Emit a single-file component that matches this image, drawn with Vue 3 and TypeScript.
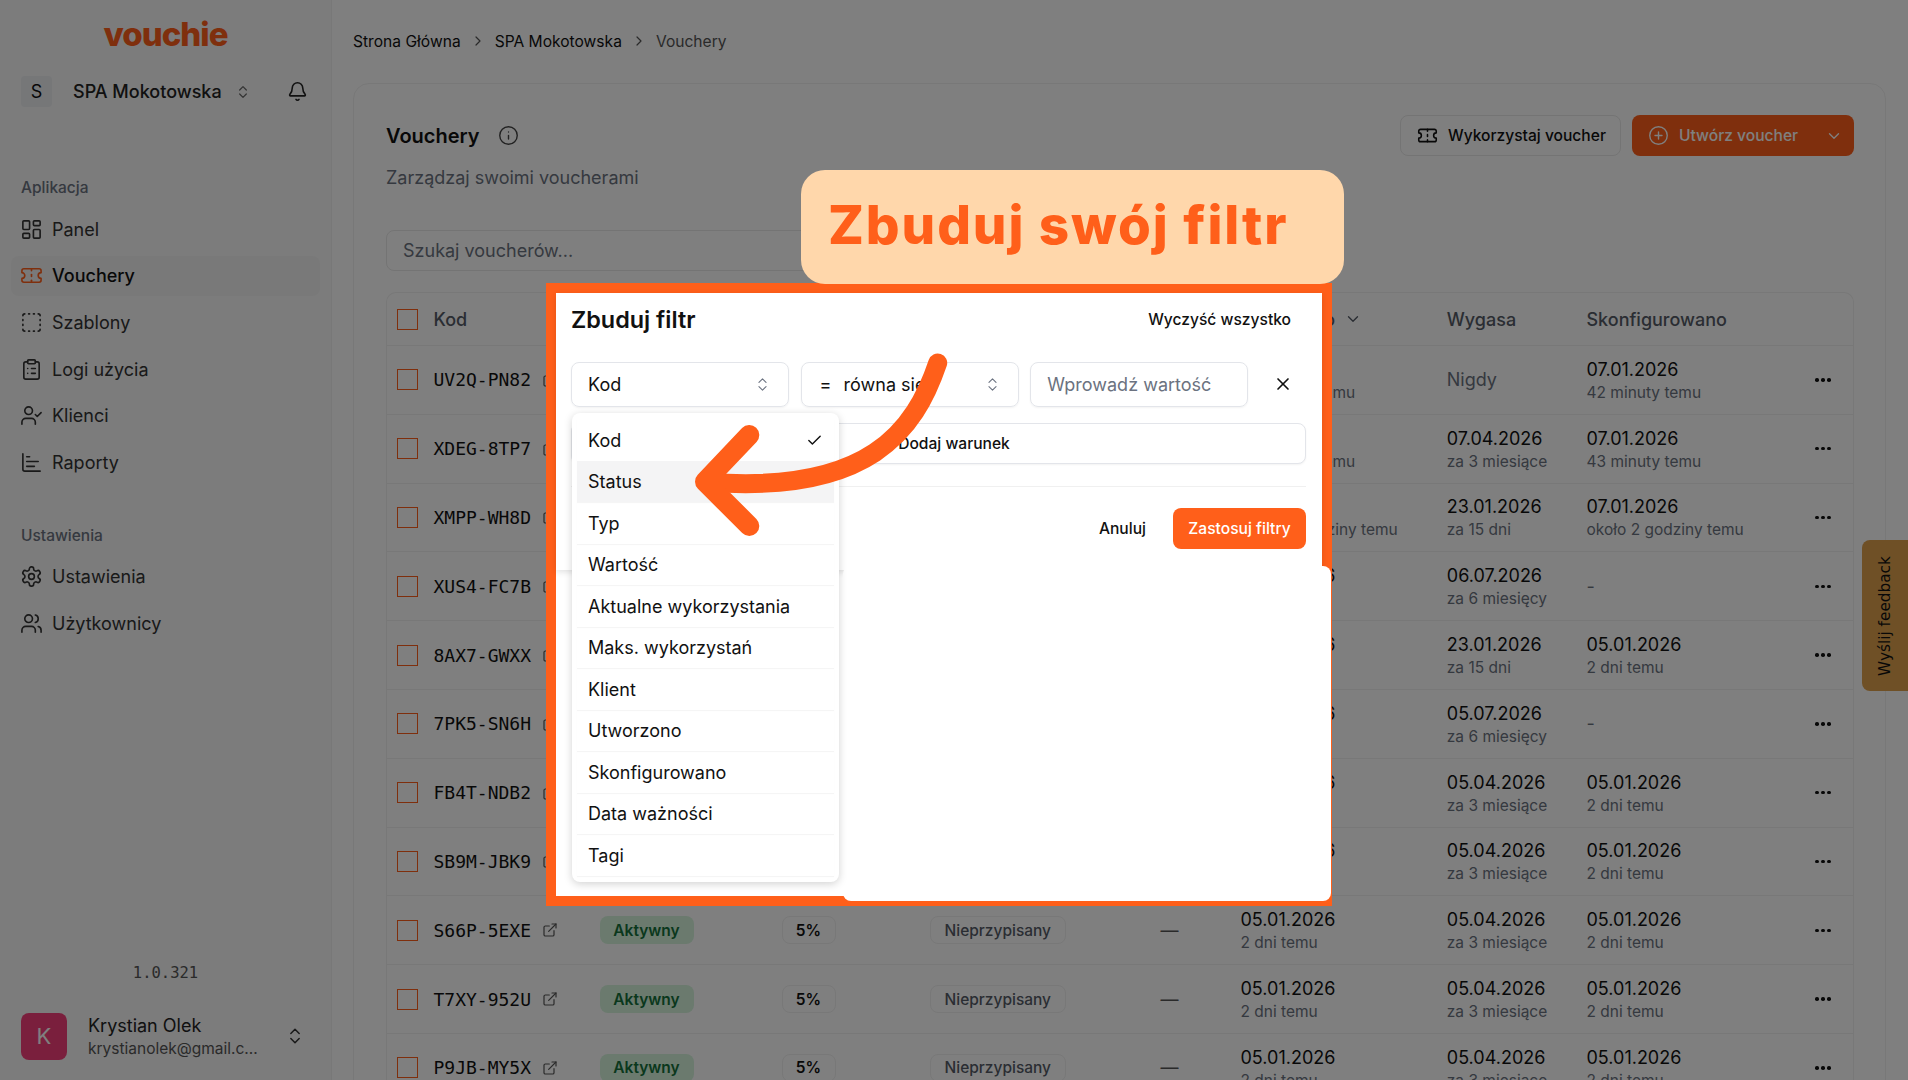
<script setup lang="ts">
import { h } from 'vue';

const paths: Record<string, string[]> = {
  dashboard: [
    'M4 3h5a1 1 0 0 1 1 1v7a1 1 0 0 1-1 1H4a1 1 0 0 1-1-1V4a1 1 0 0 1 1-1z',
    'M15 3h5a1 1 0 0 1 1 1v3a1 1 0 0 1-1 1h-5a1 1 0 0 1-1-1V4a1 1 0 0 1 1-1z',
    'M15 12h5a1 1 0 0 1 1 1v7a1 1 0 0 1-1 1h-5a1 1 0 0 1-1-1v-7a1 1 0 0 1 1-1z',
    'M4 16h5a1 1 0 0 1 1 1v3a1 1 0 0 1-1 1H4a1 1 0 0 1-1-1v-3a1 1 0 0 1 1-1z',
  ],
  ticket: [
    'M2 9a3 3 0 0 1 0 6v2a2 2 0 0 0 2 2h16a2 2 0 0 0 2-2v-2a3 3 0 0 1 0-6V7a2 2 0 0 0-2-2H4a2 2 0 0 0-2 2Z',
    'M12 5v2',
    'M12 11v2',
    'M12 17v2',
  ],
  dashed: [
    'M5 3a2 2 0 0 0-2 2',
    'M19 3a2 2 0 0 1 2 2',
    'M21 19a2 2 0 0 1-2 2',
    'M5 21a2 2 0 0 1-2-2',
    'M9 3h1',
    'M9 21h1',
    'M14 3h1',
    'M14 21h1',
    'M3 9v1',
    'M21 9v1',
    'M3 14v1',
    'M21 14v1',
  ],
  clipboard: [
    'M9 2h6a1 1 0 0 1 1 1v2a1 1 0 0 1-1 1H9a1 1 0 0 1-1-1V3a1 1 0 0 1 1-1z',
    'M16 4h2a2 2 0 0 1 2 2v14a2 2 0 0 1-2 2H6a2 2 0 0 1-2-2V6a2 2 0 0 1 2-2h2',
    'M12 11h4',
    'M12 16h4',
    'M8 11h.01',
    'M8 16h.01',
  ],
  usercheck: [
    'M2 21v-2a4 4 0 0 1 4-4h6a4 4 0 0 1 4 4v2',
    'M13 7a4 4 0 1 1-8 0 4 4 0 0 1 8 0',
    'm16 11 2 2 4-4',
  ],
  chart: ['M3 3v16a2 2 0 0 0 2 2h16', 'M7 16h8', 'M7 11h12', 'M7 6h3'],
  gear: [
    'M12.22 2h-.44a2 2 0 0 0-2 2v.18a2 2 0 0 1-1 1.73l-.43.25a2 2 0 0 1-2 0l-.15-.08a2 2 0 0 0-2.73.73l-.22.38a2 2 0 0 0 .73 2.73l.15.1a2 2 0 0 1 1 1.72v.51a2 2 0 0 1-1 1.74l-.15.09a2 2 0 0 0-.73 2.73l.22.38a2 2 0 0 0 2.73.73l.15-.08a2 2 0 0 1 2 0l.43.25a2 2 0 0 1 1 1.73V20a2 2 0 0 0 2 2h.44a2 2 0 0 0 2-2v-.18a2 2 0 0 1 1-1.73l.43-.25a2 2 0 0 1 2 0l.15.08a2 2 0 0 0 2.73-.73l.22-.39a2 2 0 0 0-.73-2.73l-.15-.08a2 2 0 0 1-1-1.74v-.5a2 2 0 0 1 1-1.74l.15-.09a2 2 0 0 0 .73-2.73l-.22-.38a2 2 0 0 0-2.73-.73l-.15.08a2 2 0 0 1-2 0l-.43-.25a2 2 0 0 1-1-1.73V4a2 2 0 0 0-2-2z',
    'M15 12a3 3 0 1 1-6 0 3 3 0 0 1 6 0',
  ],
  users: [
    'M16 21v-2a4 4 0 0 0-4-4H6a4 4 0 0 0-4 4v2',
    'M13 7a4 4 0 1 1-8 0 4 4 0 0 1 8 0',
    'M22 21v-2a4 4 0 0 0-3-3.87',
    'M16 3.13a4 4 0 0 1 0 7.75',
  ],
  bell: [
    'M10.27 21a2 2 0 0 0 3.46 0',
    'M3.26 15.33A1 1 0 0 0 4 17h16a1 1 0 0 0 .74-1.67C19.41 13.96 18 12.5 18 8A6 6 0 0 0 6 8c0 4.5-1.41 5.96-2.74 7.33',
  ],
  updown: ['m7 15 5 5 5-5', 'm7 9 5-5 5 5'],
  chevronright: ['m9 18 6-6-6-6'],
  chevrondown: ['m6 9 6 6 6-6'],
  info: ['M22 12a10 10 0 1 1-20 0 10 10 0 0 1 20 0', 'M12 16v-4', 'M12 8h.01'],
  pluscircle: ['M22 12a10 10 0 1 1-20 0 10 10 0 0 1 20 0', 'M8 12h8', 'M12 8v8'],
  plus: ['M5 12h14', 'M12 5v14'],
  link: ['M15 3h6v6', 'M10 14 21 3', 'M18 13v6a2 2 0 0 1-2 2H5a2 2 0 0 1-2-2V8a2 2 0 0 1 2-2h6'],
  x: ['M18 6 6 18', 'm6 6 12 12'],
  check: ['M20 6 9 17l-5-5'],
};

// small inline icon, strokes come from the paths map above
const Icon = (props: { name: string; size?: number; sw?: number }) =>
  h(
    'svg',
    {
      width: props.size ?? 20,
      height: props.size ?? 20,
      viewBox: '0 0 24 24',
      fill: 'none',
      stroke: 'currentColor',
      'stroke-width': props.sw ?? 1.8,
      'stroke-linecap': 'round',
      'stroke-linejoin': 'round',
    },
    paths[props.name].map((d) => h('path', { d })),
  );
Icon.props = ['name', 'size', 'sw'];

const mainNav = [
  { label: 'Panel', icon: 'dashboard' },
  { label: 'Vouchery', icon: 'ticket', active: true },
  { label: 'Szablony', icon: 'dashed' },
  { label: 'Logi użycia', icon: 'clipboard' },
  { label: 'Klienci', icon: 'usercheck' },
  { label: 'Raporty', icon: 'chart' },
];
const settingsNav = [
  { label: 'Ustawienia', icon: 'gear' },
  { label: 'Użytkownicy', icon: 'users' },
];

const d3m = ['05.04.2026', 'za 3 miesiące'];
const conf = ['05.01.2026', '2 dni temu'];
const rows = [
  { code: 'UV2Q-PN82', created: ['07.01.2026', '42 minuty temu'], expires: ['', 'Nigdy'], conf: ['07.01.2026', '42 minuty temu'] },
  { code: 'XDEG-8TP7', created: ['07.01.2026', '43 minuty temu'], expires: ['07.04.2026', 'za 3 miesiące'], conf: ['07.01.2026', '43 minuty temu'] },
  { code: 'XMPP-WH8D', created: ['07.01.2026', 'około 2 godziny temu'], expires: ['23.01.2026', 'za 15 dni'], conf: ['07.01.2026', 'około 2 godziny temu'] },
  { code: 'XUS4-FC7B', created: conf, expires: ['06.07.2026', 'za 6 miesięcy'], conf: null },
  { code: '8AX7-GWXX', created: conf, expires: ['23.01.2026', 'za 15 dni'], conf },
  { code: '7PK5-SN6H', created: conf, expires: ['05.07.2026', 'za 6 miesięcy'], conf: null },
  { code: 'FB4T-NDB2', created: conf, expires: d3m, conf },
  { code: 'SB9M-JBK9', created: conf, expires: d3m, conf },
  { code: 'S66P-5EXE', created: conf, expires: d3m, conf },
  { code: 'T7XY-952U', created: conf, expires: d3m, conf },
  { code: 'P9JB-MY5X', created: conf, expires: d3m, conf },
];

const fields = [
  'Kod',
  'Status',
  'Typ',
  'Wartość',
  'Aktualne wykorzystania',
  'Maks. wykorzystań',
  'Klient',
  'Utworzono',
  'Skonfigurowano',
  'Data ważności',
  'Tagi',
];
</script>

<template>
  <div class="page">
    <aside class="sidebar">
      <div class="logo">vouchie</div>
      <div class="workspace">
        <span class="ws-badge">S</span>
        <span class="ws-name">SPA Mokotowska</span>
        <Icon name="updown" :size="16" class="ws-arrows" />
        <Icon name="bell" :size="21" class="ws-bell" />
      </div>

      <div class="nav-label first">Aplikacja</div>
      <nav class="nav">
        <a v-for="item in mainNav" :key="item.label" class="nav-item" :class="{ active: item.active }">
          <Icon :name="item.icon" :size="23" :sw="1.7" />
          <span>{{ item.label }}</span>
        </a>
      </nav>

      <div class="nav-label second">Ustawienia</div>
      <nav class="nav">
        <a v-for="item in settingsNav" :key="item.label" class="nav-item">
          <Icon :name="item.icon" :size="23" :sw="1.7" />
          <span>{{ item.label }}</span>
        </a>
      </nav>

      <div class="version">1.0.321</div>
      <div class="user">
        <span class="user-avatar">K</span>
        <div class="user-text">
          <div class="user-name">Krystian Olek</div>
          <div class="user-mail">krystianolek@gmail.c...</div>
        </div>
        <Icon name="updown" :size="20" class="user-arrows" />
      </div>
    </aside>

    <main class="main">
      <div class="crumbs">
        <span>Strona Główna</span>
        <Icon name="chevronright" :size="16" class="crumb-sep" />
        <span>SPA Mokotowska</span>
        <Icon name="chevronright" :size="16" class="crumb-sep" />
        <span class="crumb-last">Vouchery</span>
      </div>

      <section class="card">
        <header class="card-head">
          <div>
            <div class="title-row">
              <h1>Vouchery</h1>
              <Icon name="info" :size="21" class="title-info" :sw="1.6" />
            </div>
            <p class="subtitle">Zarządzaj swoimi voucherami</p>
          </div>
          <div class="actions">
            <button class="btn-outline"><Icon name="ticket" :size="21" />Wykorzystaj voucher</button>
            <button class="btn-primary">
              <Icon name="pluscircle" :size="21" :sw="1.6" />
              <span>Utwórz voucher</span>
              <Icon name="chevrondown" :size="18" class="btn-chevron" />
            </button>
          </div>
        </header>

        <div class="search">Szukaj voucherów...</div>

        <div class="table">
          <div class="row head">
            <span class="box"></span>
            <span>Kod</span>
            <span>Status</span>
            <span>Wartość</span>
            <span>Klient</span>
            <span>Użycie</span>
            <span class="sortable">Utworzono <Icon name="chevrondown" :size="18" /></span>
            <span>Wygasa</span>
            <span>Skonfigurowano</span>
            <span></span>
          </div>
          <div v-for="row in rows" :key="row.code" class="row">
            <span class="box"></span>
            <span class="code">{{ row.code }}<Icon name="link" :size="16" class="code-link" /></span>
            <span><span class="pill green">Aktywny</span></span>
            <span><span class="pill outline strong">5%</span></span>
            <span><span class="pill outline">Nieprzypisany</span></span>
            <span class="dash">—</span>
            <span class="date">
              <span class="date-main">{{ row.created[0] }}</span>
              <span class="date-sub">{{ row.created[1] }}</span>
            </span>
            <span v-if="row.expires[0]" class="date">
              <span class="date-main">{{ row.expires[0] }}</span>
              <span class="date-sub">{{ row.expires[1] }}</span>
            </span>
            <span v-else class="never">{{ row.expires[1] }}</span>
            <span v-if="row.conf" class="date">
              <span class="date-main">{{ row.conf[0] }}</span>
              <span class="date-sub">{{ row.conf[1] }}</span>
            </span>
            <span v-else class="never">-</span>
            <span class="dots"><i></i><i></i><i></i></span>
          </div>
        </div>
      </section>
    </main>

    <div class="feedback"><span>Wyślij feedback</span></div>

    <!-- product tour layer -->
    <div class="dim"></div>

    <div class="frame">
      <div class="dialog">
        <div class="dialog-head">
          <h2>Zbuduj filtr</h2>
          <span class="clear">Wyczyść wszystko</span>
        </div>
        <div class="filter-row">
          <div class="field">
            <span>Kod</span>
            <Icon name="updown" :size="17" class="field-arrows" :sw="1.5" />
          </div>
          <div class="field">
            <span class="eq">=</span>
            <span>równa się</span>
            <Icon name="updown" :size="17" class="field-arrows" :sw="1.5" />
          </div>
          <div class="field placeholder">Wprowadź wartość</div>
          <Icon name="x" :size="20" class="remove" :sw="2" />
        </div>
        <button class="add"><Icon name="plus" :size="18" />Dodaj warunek</button>
        <div class="dialog-foot">
          <span class="cancel">Anuluj</span>
          <button class="apply">Zastosuj filtry</button>
        </div>
      </div>
    </div>
    <div class="patch"></div>

    <ul class="dropdown">
      <li v-for="(f, i) in fields" :key="f" :class="{ hover: f === 'Status' }">
        <span>{{ f }}</span>
        <Icon v-if="i === 0" name="check" :size="17" :sw="2" />
      </li>
    </ul>

    <svg class="arrow" width="1908" height="1080" viewBox="0 0 1908 1080" fill="none">
      <path d="M937.7 363C915 430 870 495 706 482" stroke="#ff5f1a" stroke-width="19" stroke-linecap="round" />
      <path d="M749.3 435 705 481.7 749.3 526" stroke="#ff5f1a" stroke-width="20" stroke-linecap="round" stroke-linejoin="round" />
    </svg>

    <div class="callout">Zbuduj swój filtr</div>
  </div>
</template>

<style>
html,
body {
  margin: 0;
  background: #fff;
}
</style>

<style scoped>
.page {
  position: relative;
  display: flex;
  width: 1908px;
  height: 1080px;
  overflow: hidden;
  background: #fff;
  color: #111;
  font-family: Inter, 'Noto Sans', sans-serif;
}

/* sidebar */
.sidebar {
  display: flex;
  flex-direction: column;
  flex: none;
  width: 332px;
  height: 1080px;
  box-sizing: border-box;
  padding-bottom: 20px;
  background: #f8f8f8;
  border-right: 1px solid #f0f0f0;
}
.logo {
  height: 70px;
  line-height: 68px;
  text-align: center;
  color: #ff5f1a;
  font-size: 33px;
  font-weight: 800;
  letter-spacing: -1px;
}
.workspace {
  display: flex;
  align-items: center;
  height: 31px;
  margin-top: 6px;
  padding-left: 21px;
}
.ws-badge {
  display: flex;
  align-items: center;
  justify-content: center;
  width: 31px;
  height: 31px;
  border-radius: 4px;
  background: #eceef1;
  font-size: 18px;
}
.ws-name {
  margin-left: 21px;
  font-size: 18px;
  font-weight: 500;
  color: #222;
}
.ws-arrows {
  margin-left: 13px;
  color: #666;
}
.ws-bell {
  margin-left: 36px;
  color: #222;
}
.nav-label {
  height: 20px;
  line-height: 20px;
  padding-left: 21px;
  font-size: 15.5px;
  font-weight: 500;
  color: #6b7280;
}
.nav-label.first {
  margin-top: 71px;
  margin-bottom: 11px;
}
.nav-label.second {
  margin-top: 43.4px;
  margin-bottom: 10.6px;
}
.nav {
  display: flex;
  flex-direction: column;
  gap: 6.7px;
}
.nav-item {
  display: flex;
  align-items: center;
  gap: 9px;
  height: 40px;
  width: 309px;
  box-sizing: border-box;
  margin-left: 11px;
  padding-left: 9px;
  border-radius: 8px;
  font-size: 18px;
  color: #333;
}
.nav-item.active {
  background: #f2f2f2;
  color: #111;
  font-weight: 500;
}
.nav-item.active svg {
  color: #ff5f1a;
}
.version {
  margin-top: auto;
  margin-bottom: 28px;
  text-align: center;
  font-family: 'DejaVu Sans Mono', monospace;
  font-size: 15.5px;
  line-height: 22px;
  color: #555;
}
.user {
  display: flex;
  align-items: center;
  padding-left: 21px;
}
.user-avatar {
  display: flex;
  align-items: center;
  justify-content: center;
  width: 46px;
  height: 47px;
  border-radius: 8px;
  background: #f53f7a;
  color: #fff;
  font-size: 22px;
}
.user-text {
  margin-left: 21px;
  padding-top: 2px;
  width: 198px;
}
.user-name {
  font-size: 18px;
  line-height: 24px;
  color: #222;
}
.user-mail {
  font-size: 15.5px;
  line-height: 22px;
  color: #555;
}
.user-arrows {
  margin-left: -1px;
  color: #333;
}

/* main column */
.main {
  flex: 1;
  min-width: 0;
  padding: 0 22px 0 21px;
}
.crumbs {
  display: flex;
  align-items: center;
  gap: 9px;
  height: 82px;
  padding-bottom: 1px;
  font-size: 15.6px;
  color: #111;
}
.crumb-sep {
  color: #555;
}
.crumb-last {
  color: #555;
}
.card {
  height: 1200px;
  box-sizing: border-box;
  padding: 31px 31px 0 32px;
  border: 1px solid #f0f0f0;
  border-radius: 16px;
}
.card-head {
  display: flex;
  justify-content: space-between;
  height: 115px;
}
.title-row {
  display: flex;
  align-items: center;
  gap: 18px;
  height: 41px;
}
h1 {
  margin: 0;
  font-size: 20px;
  font-weight: 600;
  color: #111;
}
.title-info {
  color: #444;
}
.subtitle {
  margin: 10px 0 0;
  line-height: 24px;
  font-size: 18px;
  color: #6b7280;
}
.actions {
  display: flex;
  gap: 11px;
}
.actions button {
  display: flex;
  align-items: center;
  height: 41px;
  box-sizing: border-box;
  border-radius: 8px;
  font-family: inherit;
  font-size: 15.6px;
  font-weight: 500;
  white-space: nowrap;
}
.btn-outline {
  gap: 10px;
  width: 221px;
  padding: 0 0 0 16px;
  border: 1px solid #e8e8e8;
  background: #fff;
  color: #111;
}
.btn-primary {
  gap: 10px;
  width: 222px;
  padding: 0 0 0 16px;
  border: none;
  background: #ff5f1a;
  color: #fff;
}
.btn-chevron {
  margin-left: 17px;
}
.search {
  width: 700px;
  height: 41px;
  box-sizing: border-box;
  margin-bottom: 21px;
  padding-left: 16px;
  line-height: 39px;
  font-size: 18px;
  color: #6b7280;
  border: 1px solid #e8e8e8;
  border-radius: 8px;
}

/* table */
.table {
  border: 1px solid #f0f0f0;
  border-bottom: none;
  border-radius: 10px 10px 0 0;
}
.row {
  display: grid;
  grid-template-columns: 36.5px 166px 182px 148px 231px 80px 206.3px 139.7px 222px 1fr;
  align-items: center;
  height: 68.8px;
  box-sizing: border-box;
  padding-left: 10px;
  border-bottom: 1px solid #f0f0f0;
}
.row.head {
  height: 53px;
  font-size: 18px;
  font-weight: 500;
  color: #555b66;
}
.box {
  width: 21px;
  height: 21px;
  box-sizing: border-box;
  border: 1.5px solid #ff5f1a;
}
.sortable {
  display: flex;
  align-items: center;
  gap: 9px;
}
.code {
  display: flex;
  align-items: center;
  font-family: 'DejaVu Sans Mono', monospace;
  font-size: 18px;
  color: #111;
}
.code-link {
  margin-left: 11px;
  color: #555;
}
.pill {
  display: inline-flex;
  align-items: center;
  justify-content: center;
  height: 28px;
  box-sizing: border-box;
  border-radius: 8px;
  font-size: 15.5px;
  font-weight: 500;
}
.pill.green {
  width: 94px;
  background: #d6f5dd;
  color: #14703a;
  font-weight: 600;
}
.pill.outline {
  padding: 0 14px;
  border: 1px solid #f0f0f0;
  color: #555b66;
}
.pill.strong {
  width: 54px;
  padding: 0;
  color: #111;
  font-weight: 600;
}
.dash {
  font-size: 18px;
  color: #555;
}
.date {
  display: flex;
  flex-direction: column;
  padding-top: 2px;
}
.date-main {
  font-size: 18px;
  line-height: 24px;
  color: #111;
}
.date-sub {
  font-size: 15.5px;
  line-height: 22px;
  color: #6b7280;
}
.never {
  font-size: 18px;
  color: #6b7280;
}
.dots {
  display: flex;
  gap: 2.5px;
  margin-left: 7px;
}
.dots i {
  width: 3.5px;
  height: 3.5px;
  border-radius: 50%;
  background: #111;
}
.feedback {
  position: absolute;
  right: 0;
  top: 540px;
  width: 46px;
  height: 151px;
  display: flex;
  align-items: center;
  justify-content: center;
  border-radius: 8px 0 0 8px;
  background: #dfa04c;
}
.feedback span {
  transform: rotate(-90deg);
  white-space: nowrap;
  font-family: 'DejaVu Sans', sans-serif;
  font-size: 15.3px;
  color: #111;
}

/* tour overlay */
.dim {
  position: absolute;
  inset: 0;
  background: rgba(0, 0, 0, 0.5);
}
.frame {
  position: absolute;
  left: 546px;
  top: 283px;
  width: 786px;
  height: 623px;
  box-sizing: border-box;
  border: 10px solid #ff5f1a;
  background: #fff;
}
.dialog {
  height: 277px;
  box-sizing: border-box;
  padding: 0 15px;
  box-shadow: 0 2px 6px rgba(0, 0, 0, 0.12);
}
.dialog-head {
  display: flex;
  align-items: center;
  justify-content: space-between;
  height: 52px;
}
h2 {
  margin: 0;
  font-size: 23.4px;
  font-weight: 600;
  color: #111;
}
.clear {
  margin-right: 16px;
  font-size: 15.6px;
  font-weight: 500;
}
.filter-row {
  display: flex;
  align-items: center;
  gap: 11.6px;
  margin-top: 16.5px;
  position: relative;
}
.field {
  position: relative;
  display: flex;
  align-items: center;
  width: 218px;
  height: 45px;
  box-sizing: border-box;
  padding-left: 16px;
  border: 1px solid #e3e5ea;
  border-radius: 8px;
  box-shadow: 0 1px 2px rgba(0, 0, 0, 0.05);
  font-size: 18px;
}
.eq {
  width: 24px;
  margin-left: 2px;
}
.field-arrows {
  position: absolute;
  right: 17px;
  color: #6b7280;
}
.placeholder {
  color: #6b7280;
}
.remove {
  margin-left: 13px;
  color: #111;
}
.add {
  display: flex;
  align-items: center;
  justify-content: center;
  gap: 9px;
  width: 735px;
  height: 41px;
  margin-top: 16.5px;
  padding-left: 10px;
  border: 1px solid #e3e5ea;
  border-radius: 8px;
  background: #fff;
  box-shadow: 0 1px 2px rgba(0, 0, 0, 0.05);
  font-family: inherit;
  font-size: 15.6px;
  font-weight: 500;
  color: #111;
}
.dialog-foot {
  display: flex;
  align-items: center;
  justify-content: flex-end;
  gap: 27px;
  width: 735px;
  margin-top: 22px;
  padding-top: 21px;
  border-top: 1px solid #f0f0f0;
}
.cancel {
  font-size: 15.6px;
  font-weight: 500;
}
.apply {
  width: 133px;
  height: 41px;
  border: none;
  border-radius: 8px;
  background: #ff5f1a;
  color: #fff;
  font-family: inherit;
  font-size: 15.6px;
  font-weight: 500;
}
.patch {
  position: absolute;
  left: 843px;
  top: 566px;
  width: 488px;
  height: 335px;
  border-radius: 8px;
  background: #fff;
}
.dropdown {
  position: absolute;
  left: 572px;
  top: 413px;
  width: 267px;
  height: 469px;
  box-sizing: border-box;
  margin: 0;
  padding: 6px 5px;
  list-style: none;
  border-radius: 8px;
  background: #fff;
  box-shadow: 0 2px 8px rgba(0, 0, 0, 0.18);
}
.dropdown li {
  display: flex;
  align-items: center;
  justify-content: space-between;
  height: 41.5px;
  box-sizing: border-box;
  padding: 1px 11px 0 11px;
  font-size: 18px;
  color: #111;
  box-shadow: 0 1px 1px rgba(0, 0, 0, 0.04);
}
.dropdown li.hover {
  background: #f4f4f5;
}
.arrow {
  position: absolute;
  left: 0;
  top: 0;
  pointer-events: none;
}
.callout {
  position: absolute;
  left: 801px;
  top: 170px;
  width: 543px;
  height: 114px;
  box-sizing: border-box;
  padding-left: 27px;
  border-radius: 24px;
  background: #ffd7ab;
  color: #ff5f1a;
  font-size: 53px;
  font-weight: 800;
  line-height: 110px;
  letter-spacing: 1.9px;
  white-space: nowrap;
}
</style>
